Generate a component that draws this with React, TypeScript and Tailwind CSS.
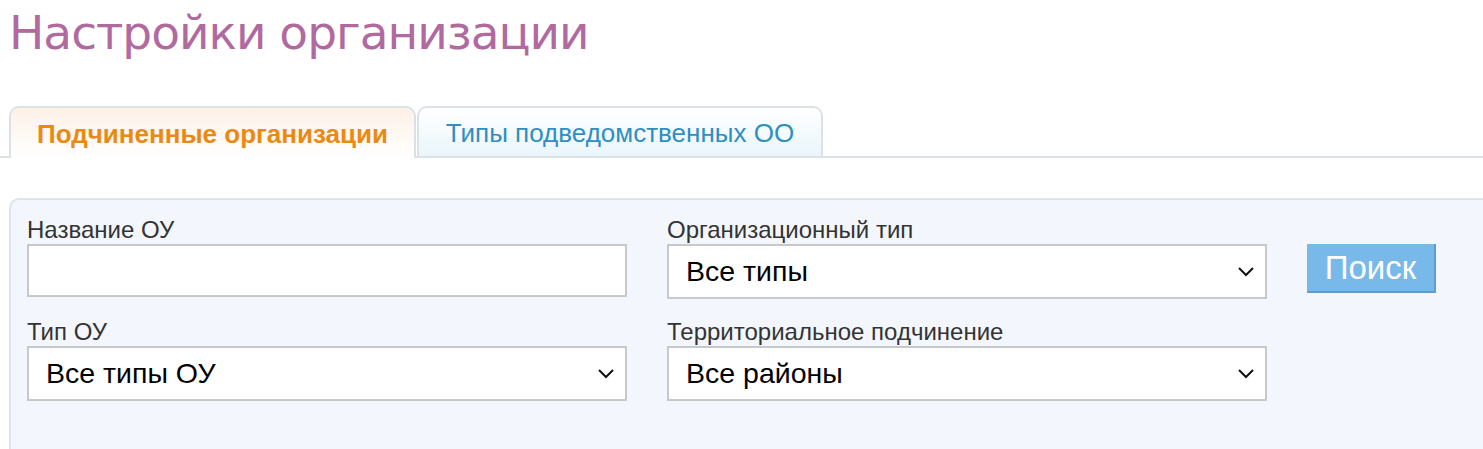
import React from "react";

function Chevron() {
  return (
    <svg width="18" height="11" viewBox="0 0 18 11" className="shrink-0">
      <path d="M2 2 L9 9 L16 2" fill="none" stroke="#111" strokeWidth="2" />
    </svg>
  );
}

function Select({ value }: { value: string }) {
  return (
    <div className="flex h-[55px] w-[600px] items-center justify-between border-2 border-[#c8c8c8] bg-white pl-[17px] pr-[10px] text-[28.5px] text-black">
      <span>{value}</span>
      <Chevron />
    </div>
  );
}

export default function App() {
  return (
    <div className="min-h-[449px] overflow-hidden bg-white font-['Liberation_Sans',Arial,sans-serif]">
      <h1 className="pl-[9px] pt-[2px] font-['DejaVu_Sans',Verdana,sans-serif] text-[47px] leading-[62px] tracking-[-1px] text-[#b06aa0]">
        Настройки организации
      </h1>
      <div className="mt-[42px] flex items-end border-b-2 border-[#dbe2e6]">
        <div className="ml-[9px] flex h-[52px] w-[407px] -mb-[2px] items-center justify-center rounded-t-[10px] border-2 border-b-0 border-[#dbe2e6] bg-gradient-to-b from-[#fdf1e6] to-white pt-[2px] text-[26px] font-bold text-[#ea8a14]">
          Подчиненные организации
        </div>
        <div className="ml-[1px] flex h-[50px] w-[406px] items-center justify-center rounded-t-[10px] border-2 border-b-0 border-[#dbe2e6] bg-gradient-to-b from-white to-[#eaf5fb] pt-[2px] text-[26px] text-[#2e8fc0]">
          Типы подведомственных ОО
        </div>
      </div>
      <div className="ml-[9px] mt-[40px] h-[252px] rounded-tl-[10px] border-l-2 border-t-2 border-[#dde3e8] bg-[#f3f7fd] pl-[16px] pt-[16px]">
        <div className="flex">
          <div className="w-[640px]">
            <div className="text-[24px] leading-[28px] text-[#333]">Название ОУ</div>
            <div className="h-[53px] w-[600px] border-2 border-[#c8c8c8] bg-white" />
          </div>
          <div className="w-[640px]">
            <div className="text-[24px] leading-[28px] text-[#333]">Организационный тип</div>
            <Select value="Все типы" />
          </div>
          <div className="pt-[28px]">
            <button className="flex h-[49px] w-[129px] items-center justify-center border-b-2 border-r-2 border-[#5b9fd0] bg-[#78b9ea] text-[33px] text-white">
              Поиск
            </button>
          </div>
        </div>
        <div className="mt-[19px] flex">
          <div className="w-[640px]">
            <div className="text-[24px] leading-[28px] text-[#333]">Тип ОУ</div>
            <Select value="Все типы ОУ" />
          </div>
          <div className="w-[640px]">
            <div className="text-[24px] leading-[28px] text-[#333]">Территориальное подчинение</div>
            <Select value="Все районы" />
          </div>
        </div>
      </div>
    </div>
  );
}
